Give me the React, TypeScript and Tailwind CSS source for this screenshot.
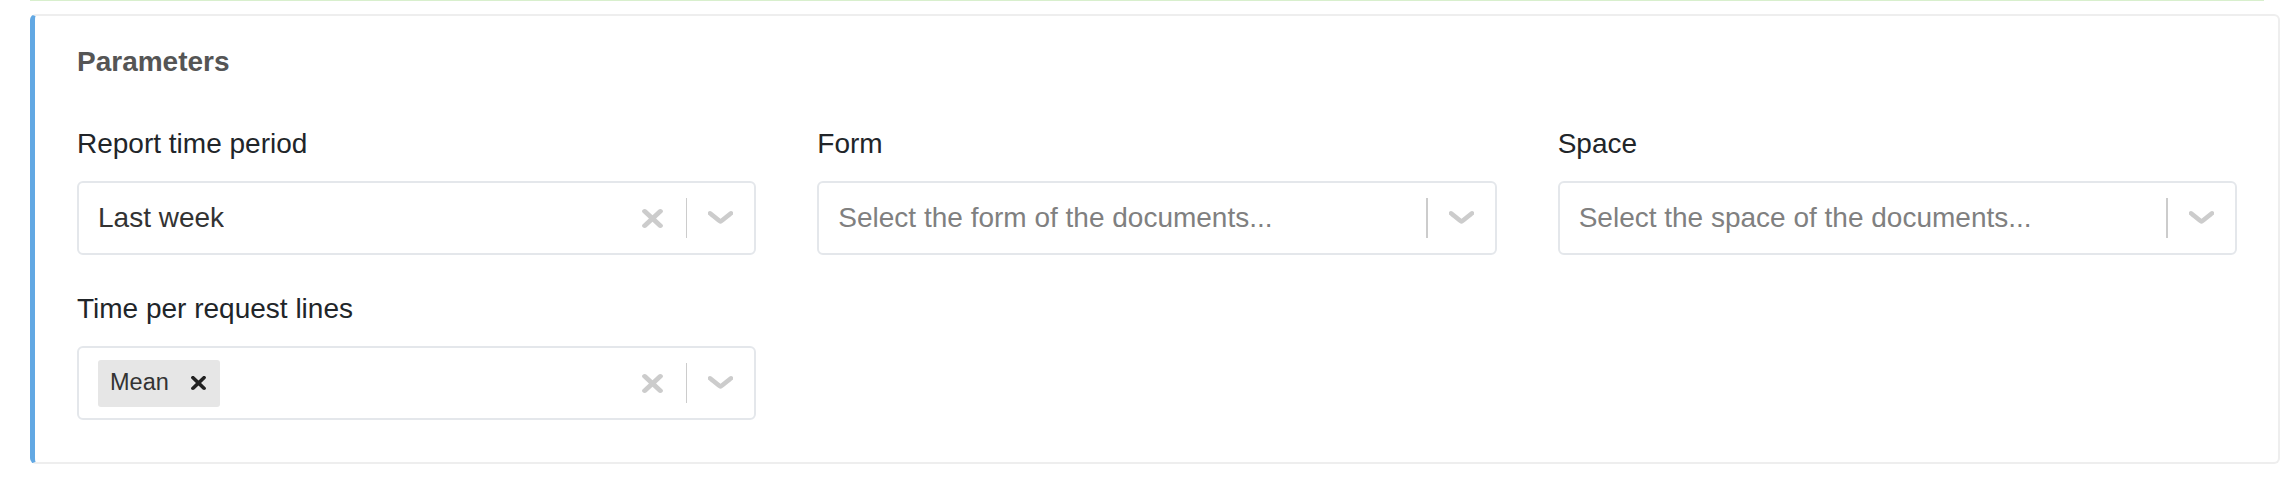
const CLEAR_PATH =
  "M14.348 14.849c-0.469 0.469-1.229 0.469-1.697 0l-2.651-3.030-2.651 3.029c-0.469 0.469-1.229 0.469-1.697 0-0.469-0.469-0.469-1.229 0-1.697l2.758-3.15-2.759-3.152c-0.469-0.469-0.469-1.228 0-1.697s1.228-0.469 1.697 0l2.652 3.031 2.651-3.031c0.469-0.469 1.228-0.469 1.697 0s0.469 1.229 0 1.697l-2.758 3.152 2.758 3.15c0.469 0.469 0.469 1.229 0 1.698z";
const CHEVRON_PATH =
  "M4.516 7.548c0.436-0.446 1.043-0.481 1.576 0l3.908 3.747 3.908-3.747c0.533-0.481 1.141-0.446 1.574 0 0.436 0.445 0.408 1.197 0 1.615-0.406 0.418-4.695 4.502-4.695 4.502-0.217 0.223-0.502 0.335-0.787 0.335s-0.57-0.112-0.789-0.335c0 0-4.287-4.084-4.695-4.502s-0.436-1.17 0-1.615z";

function CrossIcon({ className }: { className: string }) {
  return (
    <svg viewBox="5.3 4.8 9.4 10.4" preserveAspectRatio="none" className={className} fill="currentColor">
      <path d={CLEAR_PATH} />
    </svg>
  );
}

function ChevronIcon() {
  return (
    <svg viewBox="4.4 7.2 11.2 7.5" preserveAspectRatio="none" className="w-[25px] h-[14px] text-[#cccccc]" fill="currentColor">
      <path d={CHEVRON_PATH} />
    </svg>
  );
}

function SelectBox({
  value,
  placeholder,
  chip,
  clearable,
}: {
  value?: string;
  placeholder?: string;
  chip?: string;
  clearable?: boolean;
}) {
  return (
    <div className="h-[74px] flex items-center border-2 border-[#e4e7eb] rounded-[6px] bg-white">
      <div className="flex-1 min-w-0 pl-[19px] flex items-center">
        {chip ? (
          <div className="h-[47px] flex items-center bg-[#e6e6e6] rounded-[3px] pl-[12px] pr-[14px]">
            <span className="text-[23.5px] text-[#333333]">{chip}</span>
            <CrossIcon className="ml-[22px] w-[15px] h-[14px] text-[#222222]" />
          </div>
        ) : value ? (
          <span className="text-[28px] text-[#333333] truncate">{value}</span>
        ) : (
          <span className="text-[28px] text-[#808080] truncate">{placeholder}</span>
        )}
      </div>
      <div className="flex items-center pr-[21px]">
        {clearable && <CrossIcon className="w-[21px] h-[19px] text-[#cccccc] mr-[23px]" />}
        <div className="w-[1.5px] h-[40px] bg-[#cccccc]" />
        <div className="ml-[21px] flex items-center">
          <ChevronIcon />
        </div>
      </div>
    </div>
  );
}

function Field({ label, children }: { label: string; children: React.ReactNode }) {
  return (
    <div>
      <div className="text-[28px] leading-[40px] text-[#212529] mb-[17px]">{label}</div>
      {children}
    </div>
  );
}

export default function App() {
  return (
    <div className="w-full bg-white font-['Liberation_Sans',Arial,sans-serif] h-[486px]">
      <div className="h-px mx-[30px] bg-[#d8efcd]" />
      <div className="mt-[13px] ml-[30px] mr-[14px] border-2 border-[#eeeeee] border-l-[5px] border-l-[#62a8e3] rounded-[6px] pl-[42px] pr-[41px] pt-[30px] pb-[42px]">
        <h3 className="text-[28px] leading-[32px] font-bold text-[#555555] mb-[46px]">Parameters</h3>
        <div className="grid grid-cols-3 gap-x-[61px] gap-y-[34px]">
          <Field label="Report time period">
            <SelectBox value="Last week" clearable />
          </Field>
          <Field label="Form">
            <SelectBox placeholder="Select the form of the documents..." />
          </Field>
          <Field label="Space">
            <SelectBox placeholder="Select the space of the documents..." />
          </Field>
          <Field label="Time per request lines">
            <SelectBox chip="Mean" clearable />
          </Field>
        </div>
      </div>
    </div>
  );
}
